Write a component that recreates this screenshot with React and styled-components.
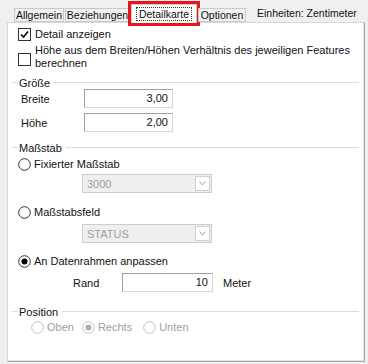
import styled, { createGlobalStyle } from "styled-components";

const GlobalStyle = createGlobalStyle`
    html, body {
        margin: 0;
        padding: 0;
        background: #f0f0f0;
    }
    body {
        font-family: "Liberation Sans", Arial, sans-serif;
        font-size: 11px;
        color: #111;
    }
`

const Window = styled.div`
    width: 368px;
    height: 364px;
    overflow: hidden;
`

const TabStrip = styled.div`
    display: flex;
    align-items: flex-end;
    height: 22px;
    padding-left: 14px;
    font-size: 10.5px;
    position: relative;
    z-index: 1;
`

const Tab = styled.div`
    box-sizing: border-box;
    flex-shrink: 0;
    height: ${(p) => (p.$active ? "19px" : "14px")};
    width: ${(p) => p.$w}px;
    margin-left: 1px;
    margin-bottom: ${(p) => (p.$active ? "-1px" : "0")};
    border: 1px solid #cacaca;
    border-bottom: ${(p) => (p.$active ? "none" : "1px solid #cacaca")};
    background: ${(p) => (p.$active ? "#fff" : "#f0f0f0")};
    display: flex;
    align-items: ${(p) => (p.$active ? "flex-start" : "center")};
    padding-top: ${(p) => (p.$active ? "2px" : "0")};
    justify-content: center;
    white-space: nowrap;
    line-height: 12px;
    outline: ${(p) => (p.$active ? "3px solid #e8141b" : "none")};
    &:first-child {
        margin-left: 0;
    }
`

const FocusText = styled.span`
    border: 1px dotted #333;
    padding: 0 2px;
    line-height: 12px;
`

const Units = styled.div`
    margin-left: 11px;
    align-self: center;
    margin-top: 4px;
    white-space: nowrap;
`

const Panel = styled.div`
    box-sizing: border-box;
    margin-left: 7px;
    width: 358px;
    height: 340px;
    background: #fff;
    border: 1px solid #d9d9d9;
    border-right: 1px solid #a8a6b4;
    border-bottom: 1px solid #a8a6b4;
    box-shadow: inset -1px -1px 0 #e3e3e3;
    display: flex;
    flex-direction: column;
    padding-left: 4px;
    padding-right: 4px;
`

const Row = styled.div`
    display: flex;
    align-items: ${(p) => (p.$top ? "flex-start" : "center")};
    margin-top: ${(p) => p.$mt}px;
    padding-left: ${(p) => p.$pl || 0}px;
    height: ${(p) => p.$h}px;
    color: ${(p) => (p.$disabled ? "#a0a0a0" : "inherit")};
`

const Box = styled.span`
    box-sizing: border-box;
    width: 13px;
    height: 13px;
    border: 1px solid #333;
    background: #fff;
    flex-shrink: 0;
    margin-right: 4px;
    margin-top: ${(p) => p.$mt || 0}px;
    display: flex;
    align-items: center;
    justify-content: center;
`

const Label = styled.span`
    line-height: 13px;
    margin-right: ${(p) => p.$mr || 0}px;
`

const GroupHeader = styled.div`
    display: flex;
    align-items: center;
    height: 13px;
    margin-top: ${(p) => p.$mt}px;
    margin-right: 1px;

    &::before {
        content: "";
        width: 6px;
        height: 1px;
        background: #dcdcdc;
        margin-right: 1px;
    }
    &::after {
        content: "";
        flex: 1;
        height: 1px;
        background: #dcdcdc;
        margin-left: 4px;
    }
`

const FieldLabel = styled.span`
    width: ${(p) => p.$w}px;
    flex-shrink: 0;
`

const TextBox = styled.div`
    box-sizing: border-box;
    width: ${(p) => p.$w}px;
    height: 19px;
    border: 1px solid;
    border-color: #a0a0a0 #d7d7d7 #d7d7d7 #a0a0a0;
    background: #fff;
    text-align: right;
    padding-right: 4px;
    line-height: 17px;
`

const Combo = styled.div`
    box-sizing: border-box;
    width: 130px;
    height: 19px;
    margin-left: 70px;
    border: 1px solid #cccccc;
    background: #efefef;
    color: #a0a0a0;
    display: flex;
    align-items: center;
    padding-left: 4px;
    margin-top: ${(p) => p.$mt}px;
`

const ComboText = styled.span`
    flex: 1;
`

const DropButton = styled.span`
    box-sizing: border-box;
    width: 15px;
    height: 15px;
    margin-right: 1px;
    background: #fff;
    border: 1px solid #d0d0d0;
    display: flex;
    align-items: center;
    justify-content: center;
`

const Suffix = styled.span`
    margin-left: 10px;
`

const RadioIcon = styled.svg`
    flex-shrink: 0;
    margin-right: 3px;
`

function CheckBox({ checked, mt }) {
    return (
        <Box $mt={mt}>
            {checked && (
                <svg width="9" height="9" viewBox="0 0 9 9">
                    <path d="M1 4.5 L3.5 7 L8 1.5" fill="none" stroke="#000" strokeWidth="1.6" />
                </svg>
            )}
        </Box>
    );
}

function Radio({ checked, disabled }) {
    const edge = disabled ? "#c3c3c3" : "#333";
    const dot = disabled ? "#b0b0b0" : "#000";
    return (
        <RadioIcon width="13" height="13" viewBox="0 0 13 13">
            <circle cx="6.5" cy="6.5" r="5.8" fill="#fff" stroke={edge} strokeWidth="1" />
            {checked && <circle cx="6.5" cy="6.5" r="3" fill={dot} />}
        </RadioIcon>
    );
}

function Chevron() {
    return (
        <svg width="7" height="5" viewBox="0 0 7 5">
            <path d="M0.5 0.5 L3.5 4 L6.5 0.5" fill="none" stroke="#a0a0a0" strokeWidth="1" />
        </svg>
    );
}

export default function App() {
    return (
        <Window>
            <GlobalStyle />
            <TabStrip>
                <Tab $w={50}>Allgemein</Tab>
                <Tab $w={65}>Beziehungen</Tab>
                <Tab $active $w={66}>
                    <FocusText>Detailkarte</FocusText>
                </Tab>
                <Tab $w={48}>Optionen</Tab>
                <Units>Einheiten: Zentimeter</Units>
            </TabStrip>

            <Panel>
                <Row $mt={5} $h={13} $pl={6}>
                    <CheckBox checked />
                    <Label>Detail anzeigen</Label>
                </Row>
                <Row $mt={3} $h={26} $pl={6} $top>
                    <CheckBox mt={9} />
                    <Label>Höhe aus dem Breiten/Höhen Verhältnis des jeweiligen Features berechnen</Label>
                </Row>

                <GroupHeader $mt={6}>Größe</GroupHeader>
                <Row $mt={0} $h={19} $pl={9}>
                    <FieldLabel $w={63}>Breite</FieldLabel>
                    <TextBox $w={89}>3,00</TextBox>
                </Row>
                <Row $mt={5} $h={19} $pl={9}>
                    <FieldLabel $w={63}>Höhe</FieldLabel>
                    <TextBox $w={89}>2,00</TextBox>
                </Row>

                <GroupHeader $mt={9}>Maßstab</GroupHeader>
                <Row $mt={3} $h={14} $pl={6}>
                    <Radio />
                    <Label>Fixierter Maßstab</Label>
                </Row>
                <Combo $mt={3}>
                    <ComboText>3000</ComboText>
                    <DropButton><Chevron /></DropButton>
                </Combo>
                <Row $mt={12} $h={14} $pl={6}>
                    <Radio />
                    <Label>Maßstabsfeld</Label>
                </Row>
                <Combo $mt={5}>
                    <ComboText>STATUS</ComboText>
                    <DropButton><Chevron /></DropButton>
                </Combo>
                <Row $mt={11} $h={14} $pl={6}>
                    <Radio checked />
                    <Label>An Datenrahmen anpassen</Label>
                </Row>
                <Row $mt={5} $h={19} $pl={61}>
                    <FieldLabel $w={49}>Rand</FieldLabel>
                    <TextBox $w={91}>10</TextBox>
                    <Suffix>Meter</Suffix>
                </Row>

                <GroupHeader $mt={13}>Position</GroupHeader>
                <Row $mt={2} $h={14} $pl={19} $disabled>
                    <Radio disabled />
                    <Label $mr={8}>Oben</Label>
                    <Radio checked disabled />
                    <Label $mr={11}>Rechts</Label>
                    <Radio disabled />
                    <Label>Unten</Label>
                </Row>
            </Panel>
        </Window>
    );
}
